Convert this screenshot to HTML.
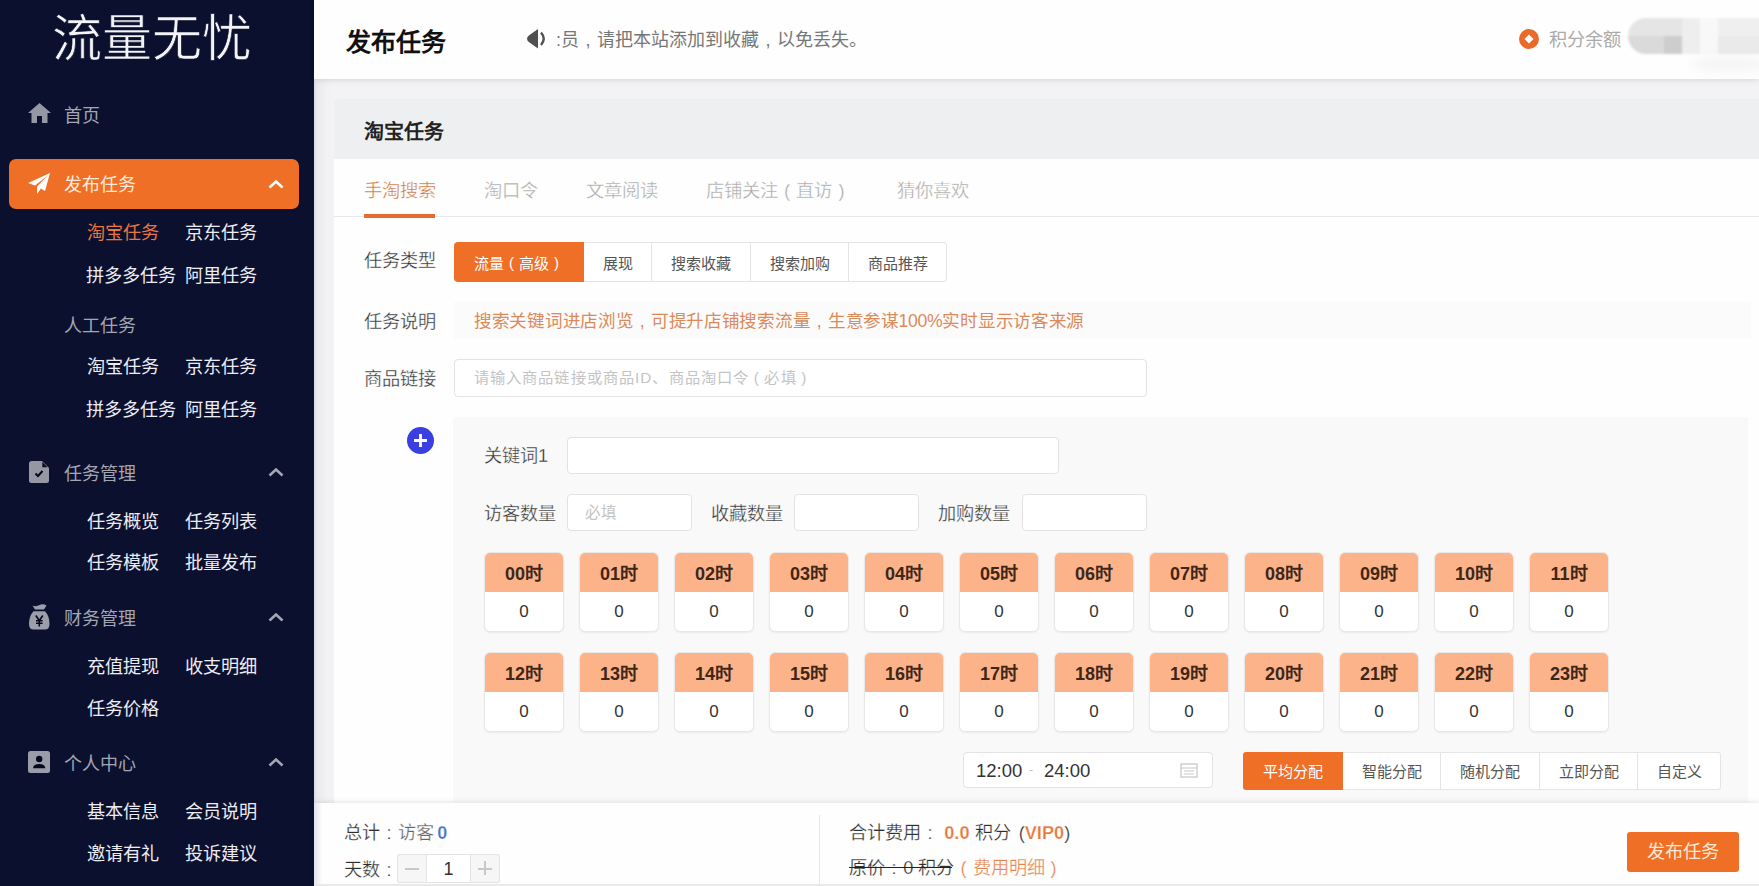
<!DOCTYPE html>
<html lang="zh-CN"><head><meta charset="utf-8"><title>发布任务</title>
<style>
*{box-sizing:border-box;margin:0;padding:0}
html,body{width:1759px;height:886px;overflow:hidden}
body{font-family:"Liberation Sans",sans-serif;background:#f3f3f5;position:relative;color:#333}
.a{position:absolute;white-space:nowrap}
i.p{font-style:normal;display:inline-block;width:1em;text-align:center}
#side{position:absolute;left:0;top:0;width:314px;height:886px;background:#0b102e}
.logo{position:absolute;left:52px;top:7px;font-family:"Liberation Serif",serif;font-size:50px;color:#f4f4f8;line-height:64px;-webkit-text-stroke:0.7px #0b102e;paint-order:normal}
.mi{position:absolute;left:64px;font-size:18px;color:#a4a6b4;line-height:20px}
.sub{position:absolute;font-size:18.2px;color:#ececf3;line-height:20px}
.chev{position:absolute;left:268px;width:16px;height:9px}
#actbar{position:absolute;left:9px;top:159px;width:290px;height:50px;background:#f06f26;border-radius:7px}
#hdr{position:absolute;left:314px;top:0;width:1445px;height:79px;background:#fefefe;box-shadow:0 1px 6px rgba(0,0,0,.12)}
.card{position:absolute;left:334px;top:99px;width:1425px;height:704px;background:#fefefe;border-radius:4px 0 0 0}
.cardh{position:absolute;left:334px;top:99px;width:1425px;height:60px;background:#eeeff1;border-radius:4px 0 0 0}
.lbl{font-size:18.2px;color:#2e2e2e;line-height:20px;-webkit-text-stroke:0.3px #fbfbfb}
.tab{position:absolute;top:181px;font-size:18.3px;color:#a6a6a6;line-height:20px;-webkit-text-stroke:0.35px #fefefe}
.seg{position:absolute;top:242px;height:40px;border:1px solid #e5e5e5;border-left:none;font-size:15px;color:#555;display:flex;align-items:center;justify-content:center;background:#fff}
.inp{position:absolute;background:#fff;border:1px solid #e3e3e3;border-radius:4px}
.hb{position:absolute;width:80px;height:80px;border-radius:6px;background:#fff;border:1px solid #e8e8e8;box-shadow:0 1px 2px rgba(0,0,0,.06);overflow:hidden}
.hh{height:39px;background:#fcb38a;font-weight:bold;font-size:18px;color:#3e2618;text-align:center;line-height:43px}
.hv{height:39px;font-size:17px;color:#333;text-align:center;line-height:39px}
.dseg{position:absolute;top:752px;height:38px;border:1px solid #e5e5e5;border-left:none;font-size:15px;color:#555;display:flex;align-items:center;justify-content:center;background:#fff;padding-bottom:2px}
#foot{position:absolute;left:314px;top:803px;width:1445px;height:83px;background:#fefefe;box-shadow:0 -1px 5px rgba(0,0,0,.1)}
.ft{position:absolute;font-size:18.2px;color:#2e2e2e;line-height:20px;-webkit-text-stroke:0.25px #fefefe}
</style></head><body>
<div id="side">
  <div class="logo a">流量无忧</div>
  <svg class="a" style="left:28px;top:103px" width="23" height="20" viewBox="0 0 23 20"><path d="M11.5 0 L23 10 L19.5 10 L19.5 20 L14 20 L14 13 L9 13 L9 20 L3.5 20 L3.5 10 L0 10 Z" fill="#9597a2"/></svg>
  <div class="mi a" style="top:106px">首页</div>
  <div id="actbar"></div>
  <svg class="a" style="left:28px;top:173px" width="22" height="21" viewBox="0 0 22 21"><path d="M22 0 L0 10 L7 12.5 L20 2.5 L9 13.5 L9 21 L13 15.5 L17 18 Z" fill="#fff"/></svg>
  <div class="mi a" style="top:175px;color:#fde9da">发布任务</div>
  <svg class="chev" style="top:180px" viewBox="0 0 16 9"><path d="M1.5 7.5 L8 1.5 L14.5 7.5" stroke="#fff" stroke-width="2.6" fill="none"/></svg>
  <div class="sub a" style="left:86.5px;top:223px;color:#e9763f">淘宝任务</div>
  <div class="sub a" style="left:185px;top:223px">京东任务</div>
  <div class="sub a" style="left:86px;top:266px">拼多多任务</div>
  <div class="sub a" style="left:185px;top:266px">阿里任务</div>
  <div class="mi a" style="top:316px">人工任务</div>
  <div class="sub a" style="left:86.5px;top:357px">淘宝任务</div>
  <div class="sub a" style="left:185px;top:357px">京东任务</div>
  <div class="sub a" style="left:86px;top:400px">拼多多任务</div>
  <div class="sub a" style="left:185px;top:400px">阿里任务</div>
  <svg class="a" style="left:29px;top:461px" width="20" height="22" viewBox="0 0 20 22"><path d="M2.5 0 L13 0 L20 7 L20 19.5 Q20 22 17.5 22 L2.5 22 Q0 22 0 19.5 L0 2.5 Q0 0 2.5 0 Z" fill="#9597a2"/><path d="M13.3 1 L13.3 6.3 L18.5 6.3 Z" fill="#05071a"/><path d="M6.5 12.5 L9 15 L13.5 10" stroke="#05071a" stroke-width="2" fill="none"/></svg>
  <div class="mi a" style="top:464px">任务管理</div>
  <svg class="chev" style="top:468px" viewBox="0 0 16 9"><path d="M1.5 7.5 L8 1.5 L14.5 7.5" stroke="#a4a6b4" stroke-width="2.6" fill="none"/></svg>
  <div class="sub a" style="left:86.5px;top:512px">任务概览</div>
  <div class="sub a" style="left:185px;top:512px">任务列表</div>
  <div class="sub a" style="left:86.5px;top:553px">任务模板</div>
  <div class="sub a" style="left:185px;top:553px">批量发布</div>
  <svg class="a" style="left:29px;top:604px" width="21" height="26" viewBox="0 0 21 26"><path d="M3.5 1.5 Q7 3 10.5 1 Q14 -0.5 17.5 1.5 L15 5.5 L6 5.5 Z" fill="#9c9eaa"/><path d="M4.5 7.3 L16 7.3 Q20.5 12 20.5 20 Q20.5 25.5 16 25.5 L4.5 25.5 Q0 25.5 0 20 Q0 12 4.5 7.3 Z" fill="#9c9eaa"/><path d="M6.8 11.5 L10.3 16.5 L13.8 11.5 M10.3 16.5 V22.5 M7 16.8 H13.6 M7 19.3 H13.6" stroke="#05071a" stroke-width="1.6" fill="none"/></svg>
  <div class="mi a" style="top:609px">财务管理</div>
  <svg class="chev" style="top:613px" viewBox="0 0 16 9"><path d="M1.5 7.5 L8 1.5 L14.5 7.5" stroke="#a4a6b4" stroke-width="2.6" fill="none"/></svg>
  <div class="sub a" style="left:86.5px;top:657px">充值提现</div>
  <div class="sub a" style="left:185px;top:657px">收支明细</div>
  <div class="sub a" style="left:86.5px;top:699px">任务价格</div>
  <svg class="a" style="left:28px;top:751px" width="22" height="22" viewBox="0 0 22 22"><rect x="0" y="0" width="22" height="22" rx="2.5" fill="#9a9caa"/><circle cx="11.2" cy="8" r="3.2" fill="#05071a"/><path d="M5 17.2 Q5.5 13 11.2 13 Q16.8 13 17.3 17.2 Z" fill="#05071a"/></svg>
  <div class="mi a" style="top:754px">个人中心</div>
  <svg class="chev" style="top:758px" viewBox="0 0 16 9"><path d="M1.5 7.5 L8 1.5 L14.5 7.5" stroke="#a4a6b4" stroke-width="2.6" fill="none"/></svg>
  <div class="sub a" style="left:86.5px;top:802px">基本信息</div>
  <div class="sub a" style="left:185px;top:802px">会员说明</div>
  <div class="sub a" style="left:86.5px;top:844px">邀请有礼</div>
  <div class="sub a" style="left:185px;top:844px">投诉建议</div>
</div>

<div class="a" style="left:314px;top:79px;width:20px;height:724px;background:linear-gradient(90deg,#dcdce6 0,#ebebef 4px,#f1f1f3 12px,#f3f3f4 20px)"></div>
<div id="hdr"></div>
<div class="a" style="left:346px;top:28px;font-size:25px;font-weight:bold;color:#111;line-height:28px">发布任务</div>
<svg class="a" style="left:526px;top:29px" width="22" height="20" viewBox="0 0 22 20"><path d="M1 9.7 Q1 7.5 3.5 6 L12 0 L12 19.5 L3.5 13.5 Q1 12 1 9.7 Z" fill="#505050"/><path d="M15 3.5 Q20.5 9.7 15 16" stroke="#505050" stroke-width="2.4" fill="none"/></svg>
<div class="a" style="left:556px;top:30px;font-size:18px;color:#777;line-height:20px">:员<i class="p">,</i>请把本站添加到收藏<i class="p">,</i>以免丢失。</div>
<svg class="a" style="left:1519px;top:29px" width="20" height="20" viewBox="0 0 20 20"><circle cx="10" cy="10" r="10" fill="#e86b2a"/><path d="M10 5.5 L14.5 10 L10 14.5 L5.5 10 Z" fill="#fff"/></svg>
<div class="a" style="left:1549px;top:30px;font-size:18.2px;color:#aaa;line-height:20px">积分余额</div>
<div class="a" style="left:1628px;top:18px;width:150px;height:36px;border-radius:18px;overflow:hidden;filter:blur(0.8px)">
<div class="a" style="left:0;top:0;width:54px;height:18px;background:#e5e5e5"></div>
<div class="a" style="left:0;top:18px;width:36px;height:18px;background:#dadada"></div>
<div class="a" style="left:36px;top:18px;width:18px;height:18px;background:#cdcdcd"></div>
<div class="a" style="left:54px;top:0;width:18px;height:36px;background:#eeeeee"></div>
<div class="a" style="left:72px;top:0;width:18px;height:36px;background:#f8f8f8"></div>
<div class="a" style="left:90px;top:0;width:60px;height:18px;background:#efefef"></div>
<div class="a" style="left:90px;top:18px;width:60px;height:18px;background:#eaeaea"></div>
</div>

<div class="card"></div>
<div class="cardh"></div>
<div class="a" style="left:364px;top:121px;font-size:20px;font-weight:bold;color:#222;line-height:22px">淘宝任务</div>
<div class="a" style="left:334px;top:216px;width:1425px;height:1px;background:#e6e8eb"></div>
<div class="tab" style="left:364px;color:#cc6e38">手淘搜索</div>
<div class="a" style="left:364px;top:214px;width:71px;height:4px;background:#e26d2f"></div>
<div class="tab" style="left:484px">淘口令</div>
<div class="tab" style="left:586px">文章阅读</div>
<div class="tab" style="left:706px">店铺关注<i class="p">(</i>直访<i class="p">)</i></div>
<div class="tab" style="left:897px">猜你喜欢</div>

<div class="a lbl" style="left:364px;top:251px">任务类型</div>
<div class="seg" style="left:454px;width:130px;border:none;background:#f06f26;color:#fff;border-radius:4px 0 0 4px">流量<i class="p">(</i>高级<i class="p">)</i></div>
<div class="seg" style="left:584px;width:68px">展现</div>
<div class="seg" style="left:652px;width:99px">搜索收藏</div>
<div class="seg" style="left:751px;width:98px">搜索加购</div>
<div class="seg" style="left:849px;width:98px;border-radius:0 4px 4px 0">商品推荐</div>

<div class="a" style="left:454px;top:302px;width:1297px;height:37px;background:#fbfbfb"></div>
<div class="a lbl" style="left:364px;top:312px">任务说明</div>
<div class="a" style="left:474px;top:311px;font-size:17.6px;letter-spacing:-0.3px;color:#dc8a5a;line-height:20px">搜索关键词进店浏览<i class="p">,</i>可提升店铺搜索流量<i class="p">,</i>生意参谋100%实时显示访客来源</div>

<div class="a lbl" style="left:364px;top:369px">商品链接</div>
<div class="inp" style="left:454px;top:359px;width:693px;height:38px"></div>
<div class="a" style="left:474px;top:369px;font-size:15.3px;letter-spacing:1.1px;color:#c4c4c4;line-height:18px">请输入商品链接或商品ID、商品淘口令<i class="p">(</i>必填<i class="p">)</i></div>

<svg class="a" style="left:407px;top:427px" width="27" height="27" viewBox="0 0 27 27"><circle cx="13.5" cy="13.5" r="13.5" fill="#3b3ee0"/><path d="M13.5 7 V20 M7 13.5 H20" stroke="#fff" stroke-width="2.8"/></svg>
<div class="a" style="left:453px;top:417px;width:1295px;height:386px;background:#f9f9f9"></div>
<div class="a lbl" style="left:484px;top:446px">关键词1</div>
<div class="inp" style="left:567px;top:437px;width:492px;height:37px"></div>
<div class="a lbl" style="left:484px;top:504px">访客数量</div>
<div class="inp" style="left:567px;top:494px;width:125px;height:37px"></div>
<div class="a" style="left:585px;top:504px;font-size:15.5px;color:#c4c4c4;line-height:18px">必填</div>
<div class="a lbl" style="left:711px;top:504px">收藏数量</div>
<div class="inp" style="left:794px;top:494px;width:125px;height:37px"></div>
<div class="a lbl" style="left:938px;top:504px">加购数量</div>
<div class="inp" style="left:1022px;top:494px;width:125px;height:37px"></div>
<div class="hb" style="left:484px;top:552px"><div class="hh">00时</div><div class="hv">0</div></div><div class="hb" style="left:579px;top:552px"><div class="hh">01时</div><div class="hv">0</div></div><div class="hb" style="left:674px;top:552px"><div class="hh">02时</div><div class="hv">0</div></div><div class="hb" style="left:769px;top:552px"><div class="hh">03时</div><div class="hv">0</div></div><div class="hb" style="left:864px;top:552px"><div class="hh">04时</div><div class="hv">0</div></div><div class="hb" style="left:959px;top:552px"><div class="hh">05时</div><div class="hv">0</div></div><div class="hb" style="left:1054px;top:552px"><div class="hh">06时</div><div class="hv">0</div></div><div class="hb" style="left:1149px;top:552px"><div class="hh">07时</div><div class="hv">0</div></div><div class="hb" style="left:1244px;top:552px"><div class="hh">08时</div><div class="hv">0</div></div><div class="hb" style="left:1339px;top:552px"><div class="hh">09时</div><div class="hv">0</div></div><div class="hb" style="left:1434px;top:552px"><div class="hh">10时</div><div class="hv">0</div></div><div class="hb" style="left:1529px;top:552px"><div class="hh">11时</div><div class="hv">0</div></div>
<div class="hb" style="left:484px;top:652px"><div class="hh">12时</div><div class="hv">0</div></div><div class="hb" style="left:579px;top:652px"><div class="hh">13时</div><div class="hv">0</div></div><div class="hb" style="left:674px;top:652px"><div class="hh">14时</div><div class="hv">0</div></div><div class="hb" style="left:769px;top:652px"><div class="hh">15时</div><div class="hv">0</div></div><div class="hb" style="left:864px;top:652px"><div class="hh">16时</div><div class="hv">0</div></div><div class="hb" style="left:959px;top:652px"><div class="hh">17时</div><div class="hv">0</div></div><div class="hb" style="left:1054px;top:652px"><div class="hh">18时</div><div class="hv">0</div></div><div class="hb" style="left:1149px;top:652px"><div class="hh">19时</div><div class="hv">0</div></div><div class="hb" style="left:1244px;top:652px"><div class="hh">20时</div><div class="hv">0</div></div><div class="hb" style="left:1339px;top:652px"><div class="hh">21时</div><div class="hv">0</div></div><div class="hb" style="left:1434px;top:652px"><div class="hh">22时</div><div class="hv">0</div></div><div class="hb" style="left:1529px;top:652px"><div class="hh">23时</div><div class="hv">0</div></div>
<div class="inp" style="left:963px;top:752px;width:250px;height:36px"></div>
<div class="a" style="left:976px;top:761px;font-size:18.5px;color:#333;line-height:20px">12:00</div>
<div class="a" style="left:1029px;top:760px;font-size:12px;color:#bbb;line-height:20px">-</div>
<div class="a" style="left:1044px;top:761px;font-size:18.5px;color:#333;line-height:20px">24:00</div>
<svg class="a" style="left:1180px;top:762px" width="18" height="16" viewBox="0 0 18 16"><rect x="1" y="2" width="16" height="13" fill="none" stroke="#c8c8c8" stroke-width="1.3"/><path d="M1 6 H17 M4 9 H14 M4 12 H14" stroke="#c8c8c8" stroke-width="1.1"/></svg>
<div class="dseg" style="left:1243px;width:100px;border:none;background:#f06f26;color:#fff;border-radius:3px 0 0 3px">平均分配</div>
<div class="dseg" style="left:1343px;width:98px">智能分配</div>
<div class="dseg" style="left:1441px;width:99px">随机分配</div>
<div class="dseg" style="left:1540px;width:98px">立即分配</div>
<div class="dseg" style="left:1638px;width:83px;border-radius:0 3px 3px 0">自定义</div>

<div id="foot"></div>
<div class="a" style="left:314px;top:803px;width:8px;height:83px;background:linear-gradient(90deg,#e2e2ea,rgba(254,254,254,0))"></div>
<div class="a" style="left:1690px;top:56px;width:80px;height:16px;border-radius:50%;background:rgba(0,0,0,.035);filter:blur(5px)"></div>
<div class="a" style="left:314px;top:884px;width:1445px;height:2px;background:#e9e9e9"></div>
<div class="ft a" style="left:344px;top:823px">总计<i class="p">:</i><span style="color:#666">访客</span><b style="color:#3c74c8;font-size:18px;margin-left:3px">0</b></div>
<div class="ft a" style="left:344px;top:860px">天数<i class="p">:</i></div>
<div class="a" style="left:397px;top:854px;width:103px;height:29px;border:1px solid #e3e3e3;border-radius:3px;background:#fff"></div>
<div class="a" style="left:397px;top:854px;width:30px;height:29px;border:1px solid #e3e3e3;border-radius:3px 0 0 3px;background:#f6f6f6"></div>
<div class="a" style="left:405px;top:868px;width:14px;height:1.5px;background:#c8c8c8"></div>
<div class="a" style="left:470px;top:854px;width:30px;height:29px;border:1px solid #e3e3e3;border-radius:0 3px 3px 0;background:#f6f6f6"></div>
<div class="a" style="left:478px;top:868px;width:14px;height:1.5px;background:#c8c8c8"></div>
<div class="a" style="left:484.3px;top:861px;width:1.5px;height:14px;background:#c8c8c8"></div>
<div class="a" style="left:427px;top:859px;width:43px;text-align:center;font-size:18px;color:#333;line-height:20px">1</div>
<div class="a" style="left:819px;top:815px;width:1px;height:71px;background:#e6e6e6"></div>
<div class="ft a" style="left:849px;top:823px">合计费用<i class="p">:</i> <b style="color:#e8783a">0.0</b> 积分 <span style="margin-left:3px">(</span><b style="color:#e8783a">VIP0</b>)</div>
<div class="a" style="left:849px;top:867px;width:103px;height:1.3px;background:#222;z-index:2"></div>
<div class="ft a" style="left:849px;top:858px">原价<i class="p">:</i>0 积分<span style="color:#e8834a"><i class="p">(</i>费用明细<i class="p">)</i></span></div>
<div class="a" style="left:1627px;top:832px;width:112px;height:40px;background:#f06f26;border-radius:3px;color:#fde8d6;font-size:18.2px;text-align:center;line-height:41px">发布任务</div>
</body></html>
